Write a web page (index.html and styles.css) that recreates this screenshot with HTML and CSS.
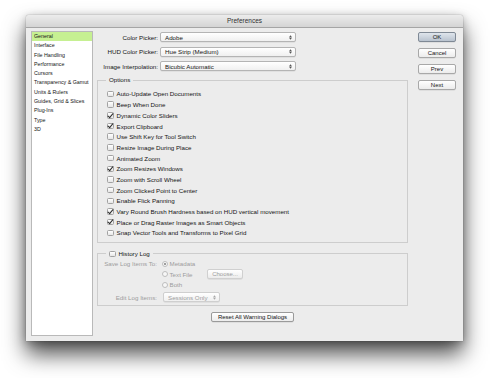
FILE: index.html
```html
<!DOCTYPE html>
<html lang="en">
<head>
  <meta charset="UTF-8">
  <title>Preferences</title>
  <link rel="stylesheet" href="styles.css">
</head>
<body>
  <!-- Preferences window -->
  <div class="window">
    <div class="titlebar">Preferences</div>

    <div class="content">
      <!-- Section list -->
      <ul class="sidebar">
        <li class="selected">General</li>
        <li>Interface</li>
        <li>File Handling</li>
        <li>Performance</li>
        <li>Cursors</li>
        <li>Transparency &amp; Gamut</li>
        <li>Units &amp; Rulers</li>
        <li>Guides, Grid &amp; Slices</li>
        <li>Plug-Ins</li>
        <li>Type</li>
        <li>3D</li>
      </ul>

      <!-- General panel -->
      <div class="main">
        <div class="field-row">
          <span class="field-label">Color Picker:</span>
          <span class="select picker">Adobe <svg class="arrows" viewBox="0 0 4 7"><path d="M0 3L2 0.5L4 3ZM0 4L2 6.5L4 4Z"/></svg></span>
        </div>
        <div class="field-row">
          <span class="field-label">HUD Color Picker:</span>
          <span class="select picker">Hue Strip (Medium) <svg class="arrows" viewBox="0 0 4 7"><path d="M0 3L2 0.5L4 3ZM0 4L2 6.5L4 4Z"/></svg></span>
        </div>
        <div class="field-row">
          <span class="field-label">Image Interpolation:</span>
          <span class="select picker">Bicubic Automatic <svg class="arrows" viewBox="0 0 4 7"><path d="M0 3L2 0.5L4 3ZM0 4L2 6.5L4 4Z"/></svg></span>
        </div>

        <fieldset class="group options">
          <legend>Options</legend>
          <div class="check"><span class="box"></span>Auto-Update Open Documents</div>
          <div class="check"><span class="box"></span>Beep When Done</div>
          <div class="check"><span class="box checked"></span>Dynamic Color Sliders</div>
          <div class="check"><span class="box checked"></span>Export Clipboard</div>
          <div class="check"><span class="box"></span>Use Shift Key for Tool Switch</div>
          <div class="check"><span class="box"></span>Resize Image During Place</div>
          <div class="check"><span class="box"></span>Animated Zoom</div>
          <div class="check"><span class="box checked"></span>Zoom Resizes Windows</div>
          <div class="check"><span class="box"></span>Zoom with Scroll Wheel</div>
          <div class="check"><span class="box"></span>Zoom Clicked Point to Center</div>
          <div class="check"><span class="box"></span>Enable Flick Panning</div>
          <div class="check"><span class="box checked"></span>Vary Round Brush Hardness based on HUD vertical movement</div>
          <div class="check"><span class="box checked"></span>Place or Drag Raster Images as Smart Objects</div>
          <div class="check"><span class="box"></span>Snap Vector Tools and Transforms to Pixel Grid</div>
        </fieldset>

        <fieldset class="group history">
          <legend><span class="box"></span>History Log</legend>
          <div class="log-grid">
            <span class="field-label dim">Save Log Items To:</span>
            <span class="radio-item"><span class="radio on"></span>Metadata</span>
            <span></span>

            <span></span>
            <span class="radio-item"><span class="radio"></span>Text File</span>
            <span class="button small dim">Choose...</span>

            <span></span>
            <span class="radio-item"><span class="radio"></span>Both</span>
            <span></span>

            <span class="field-label dim edit">Edit Log Items:</span>
            <span class="select sessions dim">Sessions Only <svg class="arrows" viewBox="0 0 4 7"><path d="M0 3L2 0.5L4 3ZM0 4L2 6.5L4 4Z"/></svg></span>
          </div>
        </fieldset>

        <div class="reset-row">
          <span class="button reset">Reset All Warning Dialogs</span>
        </div>
      </div>

      <!-- Dialog buttons -->
      <div class="actions">
        <span class="button default">OK</span>
        <span class="button">Cancel</span>
        <span class="button">Prev</span>
        <span class="button">Next</span>
      </div>
    </div>
  </div>
</body>
</html>
```

FILE: styles.css
```css
/* Page */
body {
    margin: 0;
    padding-bottom: 40px;
    background: #fff;
    font-family: "Liberation Sans", Arial, sans-serif;
    color: #141414;
}

/* Window frame */
.window {
    width: 437px;
    height: 326px;
    margin: 15px 0 0 26px;
    background: #ececec;
    border-radius: 3px 3px 0 0;
    box-shadow: 0 13px 22px rgba(0, 0, 0, 0.7), 0 2px 8px rgba(0, 0, 0, 0.25), 0 0 1px rgba(0, 0, 0, 0.6);
}

.titlebar {
    height: 12px;
    line-height: 12px;
    border-bottom: 1px solid #a5a5a5;
    border-radius: 3px 3px 0 0;
    background: linear-gradient(#ececec, #d4d4d4);
    text-align: center;
    font-size: 6.5px;
    color: #303030;
}

.content {
    display: flex;
    padding: 3px 7px 0 5px;
}

/* Section list */
.sidebar {
    box-sizing: border-box;
    width: 62px;
    height: 305px;
    margin: 0;
    padding: 0;
    list-style: none;
    background: #fff;
    border: 1px solid #b9b9b9;
    font-size: 5.3px;
}

.sidebar li {
    height: 9.3px;
    line-height: 9.3px;
    padding-left: 2px;
    white-space: nowrap;
}

.sidebar .selected {
    background: #c6f092;
}

/* Main panel */
.main {
    width: 311px;
    margin-left: 4px;
    padding-top: 1px;
    font-size: 6.2px;
}

.field-row {
    display: flex;
    align-items: center;
    height: 10px;
    margin-bottom: 4.5px;
}

.field-label {
    width: 61px;
    margin-right: 2px;
    text-align: right;
    white-space: nowrap;
}

.select {
    box-sizing: border-box;
    display: flex;
    align-items: center;
    justify-content: space-between;
    height: 10px;
    padding: 0 3px 0 4px;
    border: 1px solid #b4b4b4;
    border-radius: 2px;
    background: linear-gradient(#fff, #f0f0f0);
    box-shadow: 0 0.5px 0 rgba(0, 0, 0, 0.1);
}

.picker {
    width: 136px;
}

.arrows {
    width: 3px;
    height: 5px;
    fill: #555;
}

/* Group boxes */
.group {
    margin: 0;
    border: 1px solid #cdcdcd;
}

.group legend {
    display: flex;
    align-items: center;
    height: 8px;
    line-height: 8px;
    padding: 0 3px;
}

.options {
    margin-top: 5px;
    padding: 4.6px 0 3.6px 9px;
}

.options legend {
    margin-left: -1px;
}

.check {
    display: flex;
    align-items: center;
    height: 10.7px;
    white-space: nowrap;
}

.box {
    position: relative;
    box-sizing: border-box;
    width: 6.5px;
    height: 6.5px;
    margin-right: 3px;
    border: 1px solid #a2a2a2;
    border-radius: 1.5px;
    background: linear-gradient(#fff, #e6e6e6);
}

/* check mark sits over the box */
.box.checked::after {
    content: "";
    position: absolute;
    left: 0.5px;
    top: -1.5px;
    width: 2px;
    height: 5px;
    border: solid #2b2b2b;
    border-width: 0 1.4px 1.4px 0;
    transform: rotate(40deg);
}

.history {
    margin-top: 7px;
    padding: 0.8px 0 4px 0;
}

.history legend {
    margin-left: 8px;
}

.log-grid {
    display: grid;
    grid-template-columns: 59px 40px 1fr;
    grid-auto-rows: 10.5px;
    column-gap: 5px;
    align-items: center;
}

.log-grid .field-label {
    width: auto;
    margin: 0;
}

.log-grid .edit {
    margin-top: 3.5px;
}

.dim {
    color: #9c9c9c;
}

.radio-item {
    display: flex;
    align-items: center;
    color: #9c9c9c;
    white-space: nowrap;
}

.radio {
    position: relative;
    box-sizing: border-box;
    width: 6px;
    height: 6px;
    margin-right: 1.5px;
    border: 1px solid #bdbdbd;
    border-radius: 50%;
    background: #f7f7f7;
}

.radio.on::after {
    content: "";
    position: absolute;
    left: 1.2px;
    top: 1.2px;
    width: 1.6px;
    height: 1.6px;
    border-radius: 50%;
    background: #8c8c8c;
}

.sessions {
    width: 57px;
    margin-top: 3.5px;
    margin-left: 1px;
    border-color: #cfcfcf;
}

.sessions .arrows {
    fill: #a8a8a8;
}

/* Push buttons */
.button {
    box-sizing: border-box;
    display: flex;
    align-items: center;
    justify-content: center;
    height: 10px;
    border: 1px solid #a8a8a8;
    border-radius: 2px;
    background: linear-gradient(#fff, #ececec);
    box-shadow: 0 0.5px 0 rgba(0, 0, 0, 0.12);
    font-size: 6px;
    white-space: nowrap;
}

.button.small {
    width: 36px;
    border-color: #d0d0d0;
}

.reset-row {
    display: flex;
    justify-content: center;
    margin-top: 6px;
}

.button.reset {
    width: 83px;
    border-color: #9a9a9a;
}

.actions {
    display: flex;
    flex-direction: column;
    gap: 6px;
    width: 38px;
    margin-left: 10px;
    padding-top: 1px;
}

.button.default {
    border-color: #7f8995;
    background: linear-gradient(#dfe5ec, #b9c3cf);
}
```
